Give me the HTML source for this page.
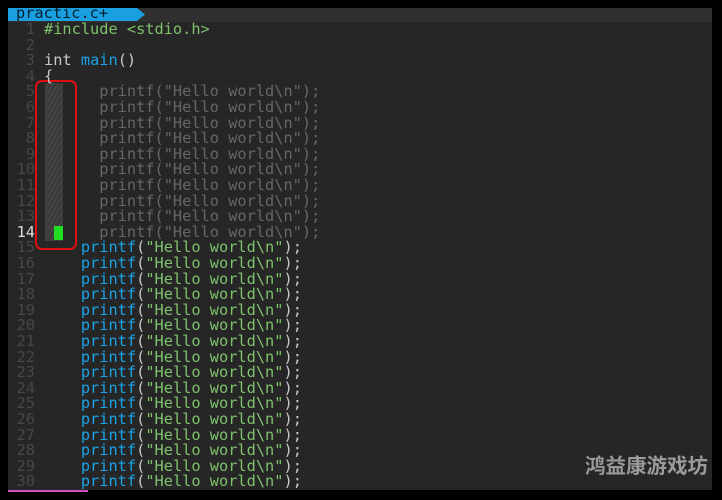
<!DOCTYPE html><html><head><style>
body{margin:0;background:#000;width:722px;height:500px;overflow:hidden;position:relative;font-family:"DejaVu Sans Mono","Liberation Mono",monospace}
#ed{position:absolute;left:8px;top:8px;width:704px;height:482px;background:#262626;overflow:hidden}
#tb{position:absolute;left:0;top:0;width:704px;height:14px;background:#303030}
#tab{position:absolute;left:0;top:0;height:13px;width:137px;background:#1a9fe0;clip-path:polygon(0 0,129px 0,137px 50%,129px 100%,0 100%)}
#tabt{position:absolute;left:8px;top:-3px;font-size:15.3px;line-height:16px;color:#062030;}
.l{position:absolute;left:0;height:16px;font-size:15.3px;line-height:16px;white-space:pre;color:#9a9a9a}
.n{position:absolute;left:0;width:27px;text-align:right;color:#474747}
.c{position:absolute;left:36px}
.g{color:#666}.b{color:#1aa3e6}.s{color:#7ec26c}.w{color:#c8c8c8}
.hatch{position:absolute;left:45px;top:83px;width:18px;height:158px;background:repeating-linear-gradient(120deg,#3a3a3a 0 3px,#4a4a4a 3px 4px)}
#box{position:absolute;left:35px;top:80px;width:42px;height:170px;border:2px solid #e01010;border-radius:7px;box-sizing:border-box}
#cur{position:absolute;left:54px;top:226px;width:9px;height:14px;background:#22dd22}
#wm{position:absolute;left:585px;top:449px;font-family:"Noto Sans CJK SC",sans-serif;font-weight:bold;font-size:20.5px;color:#9a9a9a}
#st{position:absolute;left:8px;top:490px;width:80px;height:2px;background:#d050c0}
</style></head><body><div id="ed"><div id="tb"><div id="tab"></div><div id="tabt">practic.c+</div></div></div>
<div class="hatch"></div>
<div id="lines"></div>
<div id="box"></div><div id="cur"></div>
<div id="st"></div><div id="wm">鸿益康游戏坊</div>
<div class="l" style="top:21px;left:8px"><span class="n">1</span><span class="c"><span class="s">#include &lt;stdio.h&gt;</span></span></div>
<div class="l" style="top:36.6px;left:8px"><span class="n">2</span></div>
<div class="l" style="top:52.2px;left:8px"><span class="n">3</span><span class="c"><span class="w">int</span> <span class="b">main</span><span class="w">()</span></span></div>
<div class="l" style="top:67.8px;left:8px"><span class="n">4</span><span class="c"><span class="w">{</span></span></div>
<div class="l" style="top:83.4px;left:8px"><span class="n">5</span><span class="c g">      printf("Hello world\n");</span></div>
<div class="l" style="top:99px;left:8px"><span class="n">6</span><span class="c g">      printf("Hello world\n");</span></div>
<div class="l" style="top:114.6px;left:8px"><span class="n">7</span><span class="c g">      printf("Hello world\n");</span></div>
<div class="l" style="top:130.2px;left:8px"><span class="n">8</span><span class="c g">      printf("Hello world\n");</span></div>
<div class="l" style="top:145.8px;left:8px"><span class="n">9</span><span class="c g">      printf("Hello world\n");</span></div>
<div class="l" style="top:161.4px;left:8px"><span class="n">10</span><span class="c g">      printf("Hello world\n");</span></div>
<div class="l" style="top:177px;left:8px"><span class="n">11</span><span class="c g">      printf("Hello world\n");</span></div>
<div class="l" style="top:192.6px;left:8px"><span class="n">12</span><span class="c g">      printf("Hello world\n");</span></div>
<div class="l" style="top:208.2px;left:8px"><span class="n">13</span><span class="c g">      printf("Hello world\n");</span></div>
<div class="l" style="top:223.8px;left:8px"><span class="n" style="color:#ddd">14</span><span class="c g">      printf("Hello world\n");</span></div>
<script>
var h='';for(var i=15;i<=30;i++){h+='<div class="l" style="top:'+(21+(i-1)*15.6)+'px;left:8px"><span class="n">'+i+'</span><span class="c">    <span class="b">printf</span><span class="w">(</span><span class="s">"Hello world\\n"</span><span class="w">);</span></span></div>';}
document.getElementById('lines').innerHTML=h;
</script>
</body></html>
